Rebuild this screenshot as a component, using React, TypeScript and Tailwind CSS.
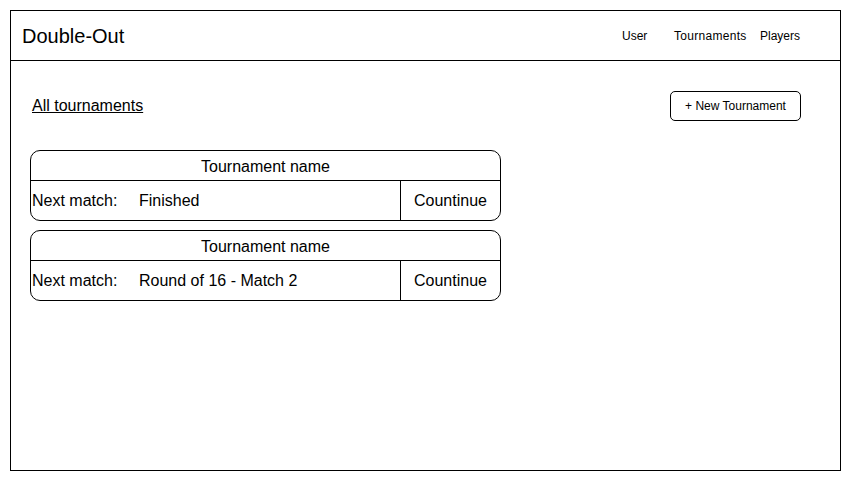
import React from "react";

function Card({ next }: { next: string }) {
  return (
    <div className="w-[471px] border border-black rounded-[10px] flex flex-col">
      <div className="h-[30px] pt-[2px] border-b border-black flex items-center justify-center text-[16px]">
        Tournament name
      </div>
      <div className="h-[39px] flex items-stretch text-[16px]">
        <div className="flex-1 flex items-center pl-px pt-px">
          <span className="w-[107px]">Next match:</span>
          <span>{next}</span>
        </div>
        <div className="w-[100px] pt-px border-l border-black flex items-center justify-center">
          Countinue
        </div>
      </div>
    </div>
  );
}

export default function App() {
  return (
    <div className="w-[851px] h-[481px] bg-white pt-[10px] pl-[10px] text-black" style={{ fontFamily: '"Liberation Sans", Arial, sans-serif' }}>
      <div className="w-[831px] h-[461px] border border-black flex flex-col">
        <div className="h-[50px] border-b border-black flex items-center pl-[11px] pr-[40px]">
          <span className="text-[20px] leading-none">Double-Out</span>
          <div className="ml-auto flex items-center text-[12px]">
            <span className="w-[52px]">User</span>
            <span className="w-[86px] tracking-[0.3px]">Tournaments</span>
            <span className="w-[40px]">Players</span>
          </div>
        </div>
        <div className="flex flex-col pl-[19px] pr-[39px]">
          <div className="mt-[30px] h-[30px] flex items-center">
            <span className="ml-[2px] text-[16px] underline">All tournaments</span>
            <div className="ml-auto w-[131px] h-[30px] border border-black rounded-[5px] flex items-center justify-center text-[12px]">
              + New Tournament
            </div>
          </div>
          <div className="mt-[29px] flex flex-col gap-[9px]">
            <Card next="Finished" />
            <Card next="Round of 16 - Match 2" />
          </div>
        </div>
      </div>
    </div>
  );
}
